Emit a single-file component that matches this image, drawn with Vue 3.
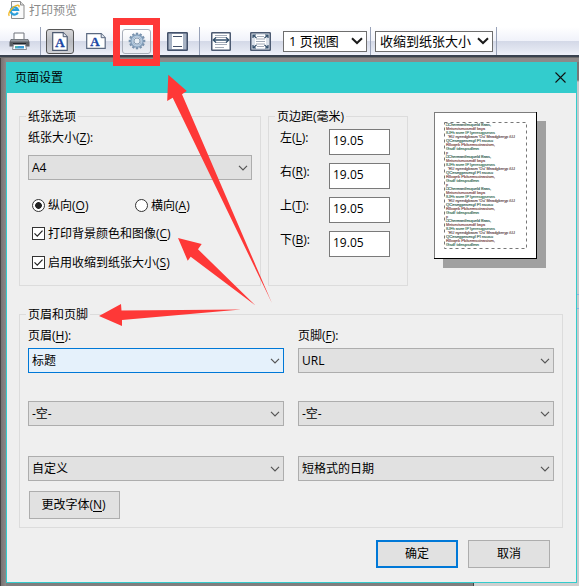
<script setup>
import { ref } from 'vue'

const margins = ref([
  { label: '左', key: 'L', value: '19.05' },
  { label: '右', key: 'R', value: '19.05' },
  { label: '上', key: 'T', value: '19.05' },
  { label: '下', key: 'B', value: '19.05' },
])

const headerFields = [
  { text: '标题', active: true },
  { text: '-空-' },
  { text: '自定义' },
]
const footerFields = [{ text: 'URL' }, { text: '-空-' }, { text: '短格式的日期' }]

const sample = [
  { t: '□Chermantfesqueld Baas,', w: 45 },
  { t: 'Metsevisescsmdif kaya', w: 39 },
  { t: '8JFh asee IP lyeresqgsesns', w: 49 },
  { t: "'RU nyeedgbasm 'Ou' Mnadgberyp iUJ", w: 67, x: 2 },
  { t: 'QCesegpnsesyl Pl nsusu', w: 47 },
  { t: 'Rlloqek Pblsemscinasism,', w: 49 },
  { t: 'Gsdf tdespsdlmn', w: 33 },
  { t: 'p', w: 2 },
]
const tints = ['#3f6a5c', '#855452', '#4a7a66', '#6d5557']
const lines = []
for (let i = 0; i < 31; i++) {
  lines.push({ ...sample[i % 8], y: 14.3 + i * 4, fill: tints[i % 4] })
}
const teeth = [0, 30, 60, 90, 120, 150, 180, 210, 240, 270, 300, 330]
</script>

<template>
  <div class="window">
    <header class="titlebar">
      <svg class="ie" width="17" height="18" viewBox="0 0 17 18">
        <path d="M3.5 .5h9l3.5 3.500v13.500h-12.500z" fill="#fafafa" stroke="#8c8c8c" />
        <path d="M12.500 .5v3.500h3.500" fill="#ddd" stroke="#8c8c8c" />
        <path d="M9.800 11.500A3.700 3.700 0 1 1 10 8.800H3.500" fill="none" stroke="#2b9fdb" stroke-width="2.200" />
        <path d="M1.300 14.800C-.8 12 5 5 9.500 4.200c1.500-.2 2 .6 1.300 2" fill="none" stroke="#f1b51c" stroke-width="1.300" />
      </svg>
      <span>打印预览</span>
    </header>

    <nav class="toolbar">
      <svg class="printer" width="21" height="19" viewBox="0 0 21 19">
        <path d="M5 8V1h10v7" fill="#fff" stroke="#70757c" />
        <path d="M2 7h17l1.500 3v4.500h-20V10z" fill="#595d63" />
        <path d="M2.500 7.500h16l1 2h-18z" fill="#989da4" />
        <path d="M4 11h13v2H4z" fill="#24272c" />
        <path d="M4.500 12.500h12l1 5h-14z" fill="#fff" stroke="#858a92" />
        <path d="M6 14h9v2.500H6z" fill="#399bd5" />
        <path d="M6 14h3v1.500H6z" fill="#53b6a3" />
      </svg>
      <i class="sep s1"></i>
      <button class="tool pressed">
        <svg width="16" height="19" viewBox="0 0 16 19">
          <path d="M.7 .7h10.500l4 4v13.600H.7z" fill="#fff" stroke="#4c5a70" stroke-width="1.200" />
          <path d="M11.200 .7v4h4" fill="#dfe5ee" stroke="#4c5a70" />
          <text x="8" y="15" class="letter">A</text>
        </svg>
      </button>
      <svg class="landscape" width="20" height="16" viewBox="0 0 20 16">
        <path d="M.7 .7h14.500l4 4v10.600H.7z" fill="#fff" stroke="#5a6880" stroke-width="1.200" />
        <path d="M15.200 .7v4h4" fill="#dfe5ee" stroke="#5a6880" />
        <text x="9" y="13.300" class="letter">A</text>
      </svg>
      <button class="tool gear">
        <svg width="18" height="18" viewBox="-9 -9 18 18">
          <rect v-for="a in teeth" :key="a" x="-1.200" y="-8.300" width="2.400" height="3" fill="#7892ad" :transform="`rotate(${a})`" />
          <circle r="5.200" fill="none" stroke="#829db9" stroke-width="3" />
          <circle r="4.800" fill="none" stroke="#b5cbe0" stroke-width="1.400" />
          <circle r="3" fill="#e8eef5" stroke="#718ba6" stroke-width=".8" />
        </svg>
      </button>
      <svg class="margins-icon" width="21" height="19" viewBox="0 0 21 19">
        <rect x=".75" y=".75" width="19.500" height="17.500" rx=".6" fill="#a8b3c4" stroke="#43516a" stroke-width="1.500" />
        <path d="M5 2h11v15H5z" fill="#fff" />
        <path d="M6 4.500h9M6 14.500h9" stroke="#43516a" />
      </svg>
      <i class="sep s2"></i>
      <svg class="fitwidth" width="20" height="19" viewBox="0 0 20 19">
        <rect x=".75" y=".75" width="18.500" height="17.500" rx=".6" fill="#fff" stroke="#4c5a72" stroke-width="1.500" />
        <path d="M4 3.500h12M4 5.500h12M4 10.500h12M4 12.500h12M4 15.500h9" stroke="#a3abb8" />
        <path d="M2 8h16M5 5.500L2.200 8 5 10.500M15 5.500L17.800 8 15 10.500" fill="none" stroke="#34506c" stroke-width="1.300" />
      </svg>
      <svg class="fitpage" width="21" height="19" viewBox="0 0 21 19">
        <rect x=".75" y=".75" width="19.500" height="17.500" rx=".6" fill="#dce2eb" stroke="#4c5a72" stroke-width="1.500" />
        <path d="M5 3h11v13H5z" fill="#fff" />
        <path d="M7 4.500h7M6 7h9M6 9.500h9M6 12h9M7 14.500h7" stroke="#a3abb8" />
        <path d="M6.500 6L3 3M3 6V3h3M14.500 6L18 3M15 3h3v3M6.500 13L3 16M3 13v3h3M14.500 13L18 16M15 16h3v-3" fill="none" stroke="#34506c" stroke-width="1.200" />
      </svg>
      <div class="pick views"><span>1 页视图</span>
        <svg width="12" height="8" viewBox="0 0 12 8"><path d="M1 1.200l5 4.800 5-4.800" /></svg>
      </div>
      <i class="sep s3"></i>
      <div class="pick shrink"><span>收缩到纸张大小</span>
        <svg width="12" height="8" viewBox="0 0 12 8"><path d="M1 1.200l5 4.800 5-4.800" /></svg>
      </div>
      <i class="sep s4"></i>
    </nav>

    <main class="backdrop">
      <section class="dialog">
        <div class="caption">
          <span>页面设置</span>
          <svg width="11" height="11" viewBox="0 0 11 11"><path d="M.5 .5l10 10M10.500 .5l-10 10" stroke="#111" stroke-width="1.100" /></svg>
        </div>
        <div class="body">
          <div class="top">
            <div class="group paper">
              <span class="legend">纸张选项</span>
              <label class="lbl">纸张大小(<u>Z</u>):</label>
              <div class="combo"><span>A4</span><svg width="10" height="6" viewBox="0 0 10 6"><path d="M1 .8l4 4 4-4" /></svg></div>
              <div class="radios">
                <label><i class="radio on"></i><span>纵向(<u>O</u>)</span></label>
                <label><i class="radio"></i><span>横向(<u>A</u>)</span></label>
              </div>
              <label class="check"><svg width="13" height="13" viewBox="0 0 13 13"><rect x=".5" y=".5" width="12" height="12" /><path d="M2.500 6.300l2.800 2.900 5.200-5.600" /></svg><span>打印背景颜色和图像(<u>C</u>)</span></label>
              <label class="check"><svg width="13" height="13" viewBox="0 0 13 13"><rect x=".5" y=".5" width="12" height="12" /><path d="M2.500 6.300l2.800 2.900 5.200-5.600" /></svg><span>启用收缩到纸张大小(<u>S</u>)</span></label>
            </div>
            <div class="group margins">
              <span class="legend">页边距(毫米)</span>
              <div v-for="m in margins" :key="m.key" class="mrow">
                <label>{{ m.label }}(<u>{{ m.key }}</u>):</label>
                <div class="field">{{ m.value }}</div>
              </div>
            </div>
            <div class="sheet">
              <svg width="103" height="147" viewBox="0 0 103 147">
                <rect width="103" height="147" fill="#fff" />
                <path d="M0 .5h102M.5 0v146" stroke="#7c7c7c" />
                <path d="M0 146.500h103M102.500 0v147" stroke="#000" />
                <rect x="10.500" y="10.500" width="82" height="126" fill="none" stroke="#777" stroke-dasharray="3 3" />
                <text v-for="(l, i) in lines" :key="i" class="tiny" :x="12 + (l.x || 0)" :y="l.y" :fill="l.fill" :stroke="l.fill" :textLength="l.w" lengthAdjust="spacingAndGlyphs">{{ l.t }}</text>
              </svg>
            </div>
          </div>

          <div class="group hf">
            <span class="legend">页眉和页脚</span>
            <div class="col">
              <label class="lbl">页眉(<u>H</u>):</label>
              <div v-for="f in headerFields" :key="f.text" class="combo" :class="{ active: f.active }">
                <span>{{ f.text }}</span><svg width="10" height="6" viewBox="0 0 10 6"><path d="M1 .8l4 4 4-4" /></svg>
              </div>
              <button class="btn font">更改字体(<u>N</u>)</button>
            </div>
            <div class="col">
              <label class="lbl">页脚(<u>F</u>):</label>
              <div v-for="f in footerFields" :key="f.text" class="combo">
                <span>{{ f.text }}</span><svg width="10" height="6" viewBox="0 0 10 6"><path d="M1 .8l4 4 4-4" /></svg>
              </div>
            </div>
          </div>

          <div class="actions">
            <button class="btn ok">确定</button>
            <button class="btn">取消</button>
          </div>
        </div>
      </section>
      <aside class="edge"></aside>
      <div class="under"></div>
    </main>

    <svg class="marks" width="579" height="586" viewBox="0 0 579 586">
      <rect x="116.500" y="21.500" width="40" height="41" fill="none" stroke="#fe3837" stroke-width="7" />
      <g fill="#fe3837">
        <path d="M168.300 74.700L167.200 101l5.500-3.300L271.900 303 182 94.300l4.800-3.200z" />
        <path d="M178 238l9.700 22.700 3-4L255.500 305.500 198 249.300l3.700-5.300z" />
        <path d="M99 316l23 10v-6l119-10.500-119.500 1L121 304z" />
      </g>
    </svg>
  </div>
</template>

<style>
body { margin: 0; overflow: hidden; }
</style>

<style scoped>
* { box-sizing: border-box; }
.window {
  position: relative; width: 579px; height: 586px; overflow: hidden;
  display: flex; flex-direction: column; background: #fff; color: #000;
  font: 12px/16px "Open Sans", "Noto Sans CJK SC", sans-serif;
}
svg { display: block; flex: none; }
button { font: inherit; color: inherit; padding: 0; }
u { text-underline-offset: 2px; text-decoration-thickness: 1px; text-decoration-skip-ink: none; }
.titlebar { height: 27px; flex: none; display: flex; padding: 1px 0 0 8px; color: #8b8b8b; }
.titlebar span { margin: 2px 0 0 4px; }
.toolbar {
  height: 31px; flex: none; display: flex; align-items: center; padding: 0 0 3px;
  background: linear-gradient(#fff 0, #f0f2fa 14px, #d3d8e7 14px, #e1e5f0 22px, #f0f2fa 28px, #39424f 28px, #39424f 30px, #6a6a6a 30px);
}
.sep { width: 1px; height: 28px; background: #98a2b8; flex: none; }
.printer { margin-left: 9px; }
.s1 { margin: 0 5px 0 10px; }
.tool { display: flex; align-items: center; justify-content: center; height: 25px; border-radius: 3px; flex: none; }
.pressed { width: 28px; border: 1px solid #555; background: linear-gradient(#d7d7d9, #b9bbc0 50%, #cfd1d5); }
.gear { width: 29px; margin-left: 16px; border: 1px solid #a9afba; background: linear-gradient(#fff, #f2f3f8 50%, #dde1ea 50%, #eceef4); }
.landscape { margin-left: 12px; }
.letter { font: bold 13px "Liberation Serif", serif; fill: #1c46a4; stroke: #1c46a4; stroke-width: .3; text-anchor: middle; }
.margins-icon { margin-left: 16px; }
.s2 { margin: 0 11px; }
.fitpage { margin-left: 19px; }
.pick {
  display: flex; align-items: center; justify-content: space-between; height: 21px; flex: none;
  border: 1px solid #6e6e6e; background: #fff; font-size: 13px; line-height: 19px; padding: 0 3px 0 5px; white-space: nowrap;
}
.pick svg path { fill: none; stroke: #1b1b1b; stroke-width: 2; }
.views { width: 84px; margin-left: 12px; }
.s3 { margin: 0 4px 0 3px; }
.shrink { width: 118px; padding-left: 4px; }
.s4 { margin-left: 3px; }

.backdrop {
  flex: 1; display: grid; grid-template-columns: 571px 1fr; grid-template-rows: 521px 1fr; padding: 4px 0 0 6px;
  background: linear-gradient(90deg, #454343 0, #454343 1px, #777373 1px, #8d8989 6px, #8d8989);
}
.dialog { background: #efefef; border: 1px solid #33cccd; border-top: 0; display: flex; flex-direction: column; }
.caption { height: 31px; flex: none; background: #33cccd; display: flex; align-items: center; justify-content: space-between; padding: 0 10px 0 8px; }
.body { flex: 1; padding: 23px 12px 0; }
.top { display: flex; }
.group { position: relative; border: 1px solid #dcdcdc; }
.legend { position: absolute; left: 6px; top: -8px; padding: 0 2px; background: #efefef; white-space: nowrap; }
.paper { width: 242px; height: 170px; padding: 13px 8px 0; }
.lbl { display: block; height: 16px; }
.combo {
  height: 25px; border: 1px solid #adadad; background: #e1e1e1; display: flex; align-items: center;
  justify-content: space-between; padding: 0 3px;
}
.combo svg path { fill: none; stroke: #555; stroke-width: 1.200; }
.combo.active { border-color: #0078d7; background: #e5f1fb; }
.paper .combo { margin-top: 9px; width: 224px; }
.radios { display: flex; padding: 17px 0 0 4px; }
.radios label { display: flex; width: 103px; align-items: center; white-space: pre; }
.radios span, .check span { padding-top: 1px; margin-bottom: -1px; }
.radio { width: 13px; height: 13px; border: 1px solid #333; border-radius: 50%; background: #fff; margin-right: 3px; flex: none; }
.radio.on { background: radial-gradient(circle, #222 3px, #fff 3.700px); }
.check { display: flex; align-items: center; margin: 12px 0 0 4px; height: 16px; }
.check + .check { margin-top: 13px; }
.check svg { margin-right: 3px; }
.check rect { fill: #fff; stroke: #333; }
.check path { fill: none; stroke: #222; stroke-width: 1.200; }
.margins { width: 140px; height: 170px; margin-left: 7px; padding: 12px 0 0 11px; display: flex; flex-direction: column; gap: 8px; }
.mrow { display: flex; }
.mrow label { width: 49px; padding-top: 1px; }
.field { width: 61px; height: 26px; border: 1px solid #7a7a7a; background: #fff; padding: 3px 0 0 3px; }
.sheet { margin: -4px 0 0 26px; width: 103px; height: 147px; box-shadow: 9px 9px 0 #a0a0a0; }
.tiny { font: 4.200px "Liberation Sans", sans-serif; stroke-width: .18; }
.hf { width: 544px; height: 214px; margin-top: 28px; padding: 13px 8px 0; display: flex; gap: 14px; }
.col { width: 256px; }
.hf .combo { margin-top: 28px; }
.hf .combo:nth-child(2) { margin-top: 4px; }
.hf .combo:nth-child(4) { margin-top: 30px; }
.btn { width: 82px; height: 28px; border: 1px solid #adadad; background: #e1e1e1; }
.font { width: 91px; margin: 10px 0 0 1px; padding-right: 2px; }
.actions { display: flex; justify-content: flex-end; gap: 10px; padding: 12px 14px 0 0; }
.ok { border: 2px solid #0078d7; }
.edge { background: linear-gradient(#777 0, #777 18px, #c9c9cb 20px, #c9c9cb 232px, #8fb2df 232px, #8fb2df 233px, #c9c9cb 233px, #c9c9cb 246px, #8fb2df 246px, #8fb2df 247px, #c9c9cb 247px); }
.under { grid-column: 1 / 3; background: linear-gradient(90deg, #807e7e 467px, #444 467px, #444 468px, #cfcfcf 468px); }
.marks { position: absolute; left: 0; top: 0; pointer-events: none; }
</style>
